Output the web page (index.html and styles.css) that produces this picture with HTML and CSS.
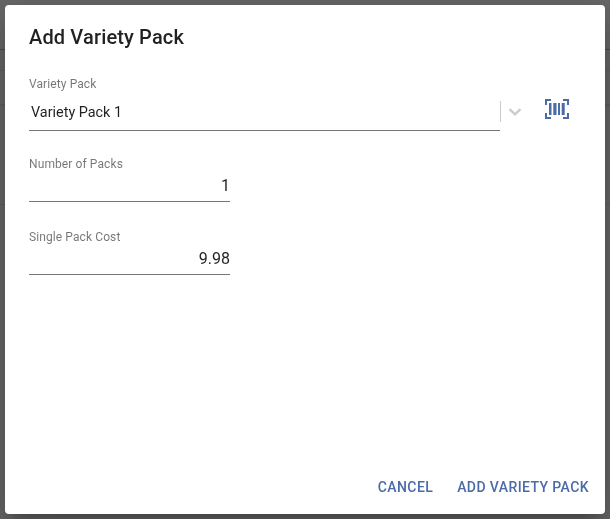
FILE: index.html
```html
<!DOCTYPE html>
<html lang="en">
<head>
<meta charset="utf-8">
<title>Add Variety Pack</title>
<link rel="stylesheet" href="styles.css">
</head>
<body>
<div class="page">
  <div class="row row-a"></div>
  <div class="row row-b"></div>
  <div class="row row-c"></div>
  <div class="row row-d"></div>
</div>
<div class="overlay">
  <div class="dialog">
    <h2 class="title">Add Variety Pack</h2>
    <div class="content">
      <div class="select-row">
        <div class="field field-select">
          <label class="label">Variety Pack</label>
          <div class="select-control">
            <span class="select-value">Variety Pack 1</span>
            <span class="separator"></span>
            <svg class="chevron" width="20" height="20" viewBox="0 0 20 20"><path d="M4.500 7.200 10 12.400l5.500-5.200" fill="none" stroke="#ccc" stroke-width="2.400"/></svg>
          </div>
        </div>
        <svg class="barcode" width="24" height="20" viewBox="0 0 24 20" fill="#4a6ba8">
          <path d="M0 6V0h6v2H2v4zM18 0h6v6h-2V2h-4zM0 14h2v4h4v2H0zM22 14h2v6h-6v-2h4z"/>
          <path d="M4 4h2.500v12H4zM8.300 4h3.200v12H8.300zM13 4h2v12h-2zM16.700 4h3v12h-3z"/>
        </svg>
      </div>
      <div class="field field-number field-packs">
        <label class="label">Number of Packs</label>
        <div class="number-value">1</div>
      </div>
      <div class="field field-number field-cost">
        <label class="label">Single Pack Cost</label>
        <div class="number-value">9.98</div>
      </div>
    </div>
    <div class="actions">
      <button class="btn" type="button">Cancel</button>
      <button class="btn" type="button">Add Variety Pack</button>
    </div>
  </div>
</div>
</body>
</html>
```
FILE: styles.css
```css
* { box-sizing: border-box; }
html, body { margin: 0; height: 100%; overflow: hidden; }
body { font-family: Roboto, "Liberation Sans", sans-serif; background: #fff; }

.page { height: 519px; }
.row { border-bottom: 1px solid #ebebeb; }
.row-a { height: 50px; border-bottom-color: #b9b9b9; }
.row-b { height: 21px; }
.row-c { height: 35px; border-bottom-width: 2px; }
.row-d { height: 99px; }

.overlay {
  position: fixed;
  inset: 0;
  background: rgba(0, 0, 0, 0.6);
  display: flex;
  align-items: center;
  justify-content: center;
}
.dialog {
  width: 600px;
  height: 509px;
  background: #fff;
  border-radius: 4px;
  display: flex;
  flex-direction: column;
  box-shadow: 0 11px 15px -7px rgba(0,0,0,.2), 0 24px 38px 3px rgba(0,0,0,.14), 0 9px 46px 8px rgba(0,0,0,.12);
}
.title {
  margin: 0;
  padding: 19px 24px 0;
  font-size: 20px;
  line-height: 26px;
  font-weight: 500;
  letter-spacing: 0.15px;
  color: rgba(0,0,0,.87);
}
.content { flex: 1; padding: 0 24px; }

.select-row { display: flex; align-items: flex-start; margin-top: 27px; }
.field-select { width: 471px; }
.label {
  display: block;
  font-size: 12px;
  line-height: 14px;
  color: rgba(0,0,0,.54);
  letter-spacing: 0.1px;
}
.select-control {
  display: flex;
  align-items: center;
  height: 33px;
  margin-top: 7px;
  position: relative;
}
.select-value {
  flex: 0 0 471px;
  height: 33px;
  line-height: 30px;
  padding-left: 2px;
  font-size: 14.4px;
  color: rgba(0,0,0,.87);
  border-bottom: 1px solid #757575;
}
.separator {
  width: 1px;
  height: 21px;
  background: #ccc;
  position: absolute;
  left: 471px;
  top: 3px;
}
.chevron { position: absolute; left: 476px; top: 4px; }
.barcode { flex: none; margin: 22px 0 0 45px; }

.field-number { width: 201px; }
.field-packs { margin-top: 26px; }
.field-cost { margin-top: 28px; }
.number-value {
  height: 31px;
  line-height: 29px;
  text-align: right;
  font-size: 16px;
  color: rgba(0,0,0,.87);
  border-bottom: 1px solid #757575;
}

.actions {
  display: flex;
  justify-content: flex-end;
  gap: 8px;
  padding: 0 8px 9px;
}
.btn {
  height: 36px;
  padding: 0 8px;
  border: 0;
  background: none;
  font: 500 14px/36px Roboto, "Liberation Sans", sans-serif;
  letter-spacing: 0.4px;
  text-transform: uppercase;
  color: #4a6ba8;
  cursor: pointer;
}
```
